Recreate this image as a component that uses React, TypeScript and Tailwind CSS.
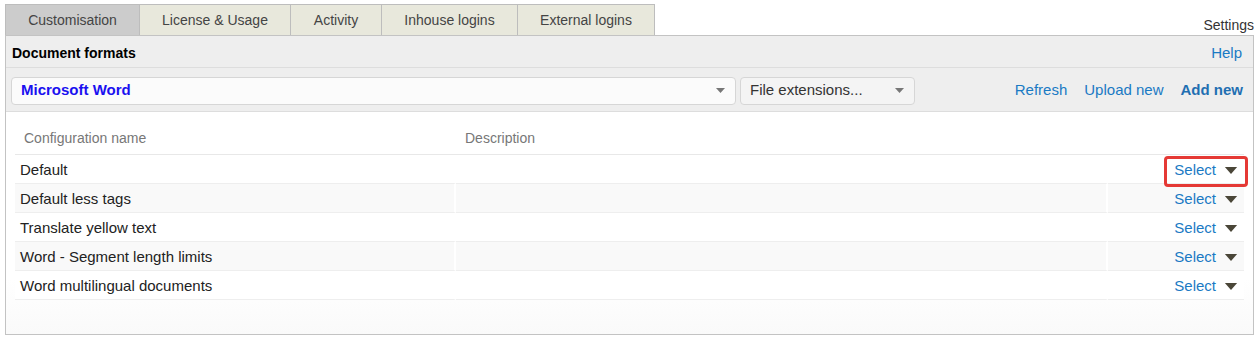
import { Fragment } from 'react'

const tabs = [
  { label: 'Customisation', w: 'w-[135px]', active: true },
  { label: 'License & Usage', w: 'w-[152px]' },
  { label: 'Activity', w: 'w-[92px]' },
  { label: 'Inhouse logins', w: 'w-[137px]' },
  { label: 'External logins', w: 'w-[138px]' },
]

const configs = [
  'Default',
  'Default less tags',
  'Translate yellow text',
  'Word - Segment length limits',
  'Word multilingual documents',
]

function Caret({ className }: { className?: string }) {
  return (
    <svg viewBox="0 0 14 8" className={className}>
      <path d="M0 0h14L7 8z" fill="currentColor" />
    </svg>
  )
}

export default function App() {
  return (
    <div className="w-[1259px] h-[337px] bg-white text-[14px] text-[#333] font-['Liberation_Sans',Arial,sans-serif]">
      <div className="flex items-end h-[35px] pl-[5px] pr-[5px]">
        {tabs.map((t) => (
          <div
            key={t.label}
            className={`${t.w} h-[31px] flex items-center justify-center border border-b-0 border-[#bdbdbd] -ml-px first:ml-0 text-[#444] ${
              t.active ? 'bg-[#cccccc]' : 'bg-[#e8e8dc]'
            }`}
          >
            {t.label}
          </div>
        ))}
        <div className="flex-1 text-right leading-[20px] text-[#333]">Settings</div>
      </div>

      <div className="mx-[5px] h-[300px] border border-[#c3c3c3] flex flex-col">
        <div className="h-[32px] pt-[3px] bg-[#eeeeee] border-b border-[#dddddd] flex items-center justify-between px-[6px]">
          <span className="font-bold text-black">Document formats</span>
          <a className="text-[#1a7ac4] text-[15px] mr-[5px]">Help</a>
        </div>

        <div className="h-[44px] pt-[2px] bg-[#eeeeee] border-b border-[#dddddd] flex items-center pl-[5px] pr-[10px]">
          <div className="w-[725px] h-[28px] bg-[#fbfbfb] border border-[#d6d6d6] rounded-[4px] flex items-center justify-between pl-[9px] pr-[10px]">
            <span className="font-bold text-[15px] text-[#1a10f0]">Microsoft Word</span>
            <Caret className="w-[9px] h-[7px] text-[#777]" />
          </div>
          <div className="ml-[4px] w-[175px] h-[28px] bg-[#f4f4f4] border border-[#d6d6d6] rounded-[4px] flex items-center justify-between pl-[9px] pr-[10px]">
            <span className="text-[15px] text-[#333]">File extensions...</span>
            <Caret className="w-[9px] h-[7px] text-[#777]" />
          </div>
          <div className="flex-1 flex justify-end items-center gap-[17px] text-[15px] text-[#1a7ac4]">
            <a>Refresh</a>
            <a>Upload new</a>
            <a className="font-bold text-[#1f6fb2]">Add new</a>
          </div>
        </div>

        <div className="flex-1 px-[9px] pt-[12px] bg-gradient-to-b from-white from-[75%] to-[#fafafa]">
          <div className="grid grid-cols-[441px_652px_1fr] text-[15px]">
            <div className="h-[31px] pl-[9px] pb-[1px] flex items-center text-[14px] text-[#777] border-b border-[#e8e8e8]">
              Configuration name
            </div>
            <div className="h-[31px] pl-[9px] pb-[1px] flex items-center text-[14px] text-[#777] border-b border-[#e8e8e8]">
              Description
            </div>
            <div className="h-[31px] border-b border-[#e8e8e8]" />
            {configs.map((c, i) => {
              const bg = i % 2 === 1 ? 'bg-[#f9f9f9]' : 'bg-white'
              return (
                <Fragment key={c}>
                  <div className={`h-[29px] pt-[2px] pl-[5px] flex items-center text-[#222] border-b border-[#eeeeee] border-r-2 border-r-white ${bg}`}>
                    {c}
                  </div>
                  <div className={`h-[29px] border-b border-[#eeeeee] border-r-2 border-r-white ${bg}`} />
                  <div className={`relative h-[29px] pt-[2px] flex items-center justify-end pr-[6px] border-b border-[#eeeeee] ${bg}`}>
                    {i === 0 && (
                      <div className="absolute z-10 right-[-4px] top-[1px] w-[84px] h-[31px] border-[3px] border-[#e53935] rounded-[4px]" />
                    )}
                    <a className="text-[#1a7ac4]">Select</a>
                    <Caret className="ml-[8px] w-[14px] h-[7px] text-[#4a4638]" />
                  </div>
                </Fragment>
              )
            })}
          </div>
        </div>
      </div>
    </div>
  )
}
